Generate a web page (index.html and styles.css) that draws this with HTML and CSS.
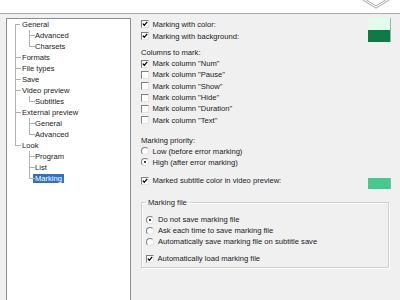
FILE: index.html
```html
<!DOCTYPE html>
<html>
<head>
<meta charset="utf-8">
<link rel="stylesheet" href="styles.css">
</head>
<body>
<div class="top">
  <svg class="chev" width="40" height="13" viewBox="0 0 40 13"><polyline points="3,-1 16,7 29,-1" fill="none" stroke="#b4b4b4" stroke-width="3"/><polyline points="3,-1 16,7 29,-1" fill="none" stroke="#ffffff" stroke-width="1"/></svg>
</div>
<div class="main">
  <div class="tree">
    <ul class="root">
      <li>General
        <ul class="sub"><li>Advanced</li><li>Charsets</li></ul>
      </li>
      <li>Formats</li>
      <li>File types</li>
      <li>Save</li>
      <li>Video preview
        <ul class="sub"><li>Subtitles</li></ul>
      </li>
      <li>External preview
        <ul class="sub"><li>General</li><li>Advanced</li></ul>
      </li>
      <li>Look
        <ul class="sub"><li>Program</li><li>List</li><li><span class="sel">Marking</span></li></ul>
      </li>
    </ul>
  </div>
  <div class="panel">
    <div class="row tall"><span class="cb"><svg viewBox="0 0 6 6"><polyline points="0.8,2.6 2.3,4.3 5.2,0.9" fill="none" stroke="#000" stroke-width="1.3"/></svg></span><span class="txt">Marking with color:</span><span class="swatch s1"></span></div>
    <div class="row tall"><span class="cb"><svg viewBox="0 0 6 6"><polyline points="0.8,2.6 2.3,4.3 5.2,0.9" fill="none" stroke="#000" stroke-width="1.3"/></svg></span><span class="txt">Marking with background:</span><span class="swatch s2"></span></div>
    <div class="lbl cols">Columns to mark:</div>
    <div class="row"><span class="cb"><svg viewBox="0 0 6 6"><polyline points="0.8,2.6 2.3,4.3 5.2,0.9" fill="none" stroke="#000" stroke-width="1.3"/></svg></span><span class="txt">Mark column &quot;Num&quot;</span></div>
    <div class="row"><span class="cb"></span><span class="txt">Mark column &quot;Pause&quot;</span></div>
    <div class="row"><span class="cb"></span><span class="txt">Mark column &quot;Show&quot;</span></div>
    <div class="row"><span class="cb"></span><span class="txt">Mark column &quot;Hide&quot;</span></div>
    <div class="row"><span class="cb"></span><span class="txt">Mark column &quot;Duration&quot;</span></div>
    <div class="row"><span class="cb"></span><span class="txt">Mark column &quot;Text&quot;</span></div>
    <div class="lbl prio">Marking priority:</div>
    <div class="row r11"><span class="rb"></span><span class="txt">Low (before error marking)</span></div>
    <div class="row r11"><span class="rb on"></span><span class="txt">High (after error marking)</span></div>
    <div class="row tall video"><span class="cb"><svg viewBox="0 0 6 6"><polyline points="0.8,2.6 2.3,4.3 5.2,0.9" fill="none" stroke="#000" stroke-width="1.3"/></svg></span><span class="txt">Marked subtitle color in video preview:</span><span class="swatch s3"></span></div>
    <fieldset class="group">
      <legend>Marking file</legend>
      <div class="row r11 g"><span class="rb on"></span><span class="txt">Do not save marking file</span></div>
      <div class="row r11 g"><span class="rb"></span><span class="txt">Ask each time to save marking file</span></div>
      <div class="row r11 g"><span class="rb"></span><span class="txt">Automatically save marking file on subtitle save</span></div>
      <div class="row r11 load"><span class="cb"><svg viewBox="0 0 6 6"><polyline points="0.8,2.6 2.3,4.3 5.2,0.9" fill="none" stroke="#000" stroke-width="1.3"/></svg></span><span class="txt">Automatically load marking file</span></div>
    </fieldset>
  </div>
</div>
</body>
</html>
```

FILE: styles.css
```css
html, body {
  margin: 0;
  padding: 0;
  width: 400px;
  height: 300px;
  overflow: hidden;
  background: #f0f0f0;
  font-family: "Liberation Sans", Arial, sans-serif;
  font-size: 7.6px;
  color: #1a1a1a;
}

.top {
  height: 13px;
  background: #fff;
  border-bottom: 1px solid #a9a9a9;
  display: flex;
  justify-content: flex-end;
}

.chev {
  display: block;
}

.main {
  display: flex;
  padding-top: 4px;
  height: 282px;
  overflow: hidden;
}

.tree {
  margin-left: 6px;
  width: 123px;
  flex: none;
  height: 300px;
  background: #fff;
  border: 1px solid #8c9096;
}

.tree ul {
  list-style: none;
  margin: 0;
}

.root {
  padding: 0 0 0 8px;
}

.sub {
  padding: 0 0 0 7px;
}

.tree li {
  position: relative;
  padding-left: 7px;
  line-height: 11px;
  white-space: nowrap;
}

.sub li {
  padding-left: 6px;
}

.tree li::before {
  content: "";
  position: absolute;
  left: 0;
  top: 0;
  width: 5px;
  height: 5px;
  border-left: 1px solid #b0b0b0;
  border-bottom: 1px solid #b0b0b0;
}

.tree li::after {
  content: "";
  position: absolute;
  left: 0;
  top: 5px;
  bottom: 0;
  border-left: 1px solid #b0b0b0;
}

.tree li:last-child::after {
  display: none;
}

.root > li:first-child::before {
  border-left: none;
}

.sel {
  display: inline-block;
  background: #2f6fd0;
  color: #fff;
  line-height: 9px;
  padding: 0 2px;
  margin-left: -2px;
}

.panel {
  flex: 1;
  padding: 0 9px 0 10px;
  min-width: 0;
}

.row {
  display: flex;
  align-items: center;
  height: 11.3px;
  white-space: nowrap;
}

.row.tall {
  height: 12px;
}

.row.r11 {
  height: 11.1px;
}

.txt {
  flex: 1;
}

.cb, .rb {
  flex: none;
  box-sizing: border-box;
  width: 8px;
  height: 8px;
  margin-right: 3.5px;
  background: #fff;
  border: 1px solid;
  border-color: #808080 #e3e3e3 #e3e3e3 #808080;
  display: flex;
  align-items: center;
  justify-content: center;
}

.cb svg {
  width: 6px;
  height: 6px;
  display: block;
}

.rb {
  border-radius: 50%;
}

.rb.on::after {
  content: "";
  width: 2px;
  height: 2px;
  border-radius: 50%;
  background: #000;
}

.swatch {
  flex: none;
  box-sizing: border-box;
  width: 23px;
  height: 12px;
  border-right: 1px solid #a8a8a8;
}

.s1 { background: #e1fbed; }
.s2 { background: #0d7b44; }
.s3 { background: #46c98c; }

.lbl {
  height: 10px;
  line-height: 10px;
}

.cols {
  margin-top: 6px;
}

.prio {
  margin-top: 10px;
}

.video {
  margin-top: 7px;
}

.video .swatch {
  height: 11px;
  margin-top: 5px;
}

.group {
  margin: 11px 2px 0 0;
  padding: 6px 0 3px 4px;
  border: 1px solid #cfcfcf;
  box-shadow: inset 1px 1px 0 #fff, 1px 1px 0 #fff;
}

.group legend {
  padding: 0 2px;
  line-height: 10px;
}

.group .rb {
  margin-right: 4px;
}

.load {
  margin-top: 6px;
}
```
